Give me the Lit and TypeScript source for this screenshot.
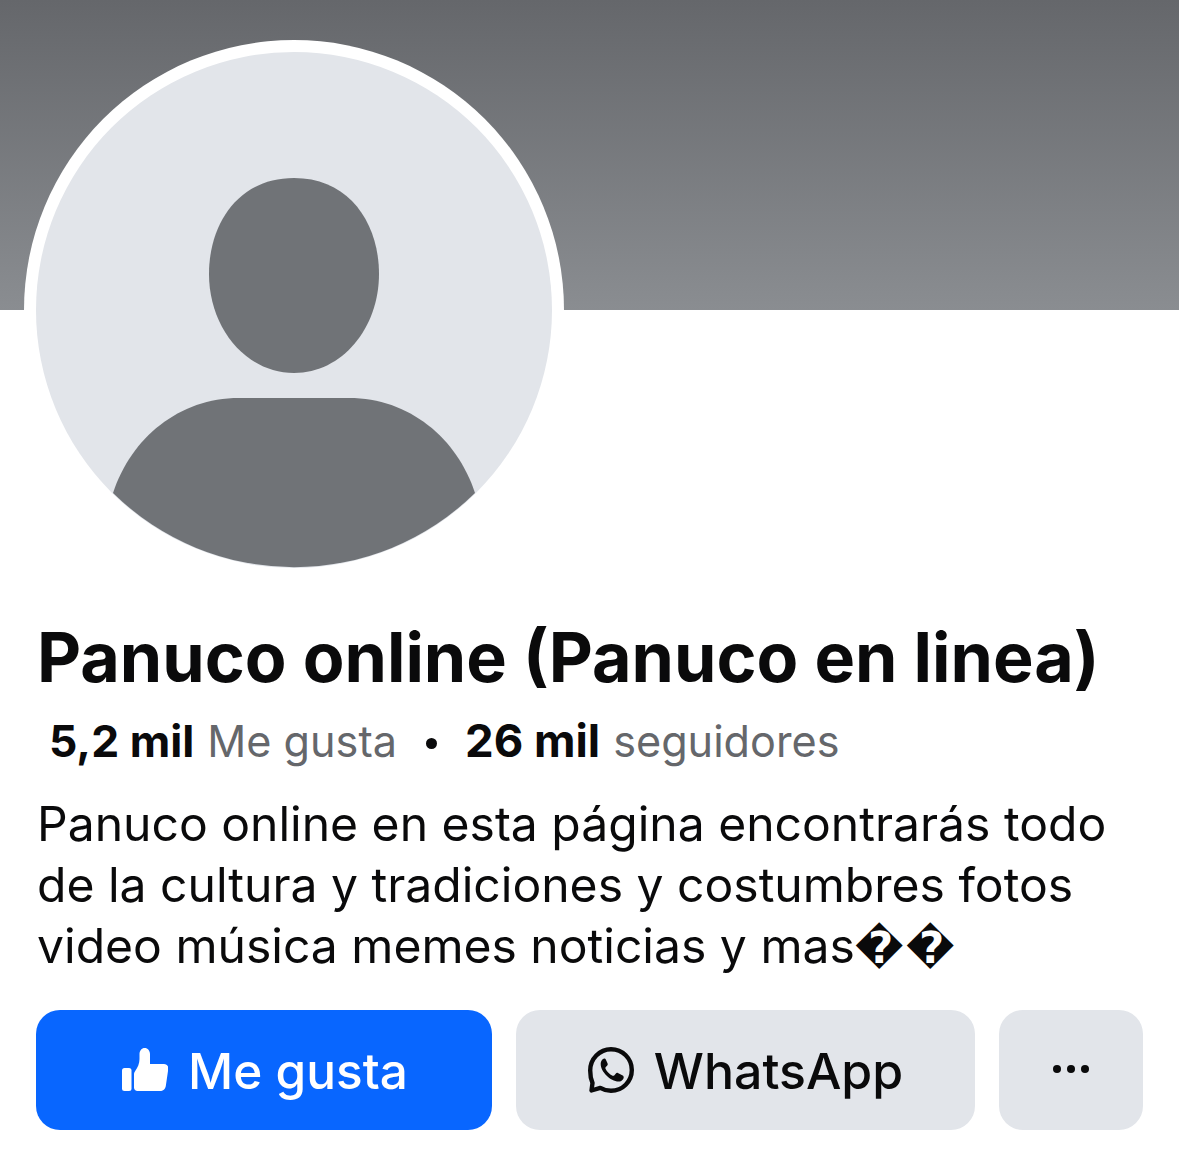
import { LitElement, html, css } from 'lit';
import { customElement } from 'lit/decorators.js';

@customElement('app-root')
export class AppRoot extends LitElement {
  static styles = css`
    :host {
      display: block;
      width: 1179px;
      height: 1160px;
      overflow: hidden;
      background: #fff;
      color: #0a0a0b;
      font-family: Inter, 'Liberation Sans', 'DejaVu Sans', sans-serif;
    }
    .cover {
      height: 310px;
      background: linear-gradient(#65676b, #8a8d91);
    }
    .avatar {
      display: block;
      width: 540px;
      height: 540px;
      margin: -270px 0 0 24px;
      position: relative;
    }
    .info {
      padding: 0 36px 0 37px;
    }
    h1 {
      margin: 38px 0 0;
      font-size: 68.15px;
      line-height: 78px;
      font-weight: 700;
      white-space: nowrap;
    }
    .stats {
      display: flex;
      align-items: center;
      margin: 18px 0 0 12px;
      font-size: 43.2px;
      line-height: 54px;
      white-space: nowrap;
    }
    .stats b {
      font-size: 44.4px;
      font-weight: 700;
      margin-right: 13px;
    }
    .stats i + b {
      font-size: 45.5px;
    }
    .stats span {
      color: #65676b;
    }
    .stats i {
      width: 11px;
      height: 11px;
      border-radius: 50%;
      background: #0a0a0b;
      margin: 4px 28px 0 29px;
    }
    .about {
      margin: 25px 0 0;
      font-size: 48.05px;
      line-height: 61px;
      white-space: nowrap;
    }
    .bad {
      font-family: 'DejaVu Sans', sans-serif;
      font-weight: 700;
      font-size: 44px;
      line-height: 0;
      letter-spacing: 2px;
    }
    .actions {
      display: flex;
      gap: 24px;
      margin: 34px 36px 0;
    }
    button {
      display: flex;
      align-items: center;
      justify-content: center;
      gap: 20px;
      height: 120px;
      border: 0;
      padding: 0;
      border-radius: 24px;
      font: 500 50px Inter, 'Liberation Sans', sans-serif;
      background: #e2e5ea;
      color: #0a0a0b;
    }
    button span {
      padding-top: 2px;
    }
    .like {
      width: 456px;
      font-size: 49.5px;
      background: #0866ff;
      color: #fff;
    }
    .like svg {
      margin-left: 2px;
    }
    .wa {
      width: 459px;
    }
    .more {
      width: 144px;
    }
    .dots {
      margin-bottom: 2px;
    }
    svg.icon {
      flex: none;
    }
  `;

  render() {
    return html`
      <div class="cover"></div>
      <svg class="avatar" viewBox="0 0 540 540">
        <circle cx="270" cy="270" r="270" fill="#fff" />
        <circle cx="270" cy="270" r="258" fill="#e2e5ea" />
        <path
          fill="#707377"
          d="M270 138C326 138 355 184 355 234C355 288 318 333 270 333C222 333 185 288 185 234C185 184 214 138 270 138Z"
        />
        <path
          fill="#707377"
          d="M89 453C107 398 155 358 215 358H325C385 358 433 398 451 453A258 258 0 0 1 89 453Z"
        />
      </svg>
      <div class="info">
        <h1>Panuco online (Panuco en linea)</h1>
        <div class="stats">
          <b>5,2 mil</b><span>Me gusta</span><i></i><b>26 mil</b><span>seguidores</span>
        </div>
        <p class="about">
          Panuco online en esta página encontrarás todo<br />de la cultura y tradiciones y
          costumbres fotos<br />video música memes noticias y mas<span class="bad">\uFFFD\uFFFD</span>
        </p>
      </div>
      <div class="actions">
        <button class="like">
          <svg class="icon" width="46" height="44" viewBox="0 0 46 44" fill="#fff">
            <rect x="0" y="20" width="9.500" height="23" rx="2.500" />
            <path
              d="M12 26c0-1 .5-2 1.200-3 2.500-3.500 4.300-7.500 4.300-12V6c0-3.300 2.200-6 5.200-6s5.300 2.700 5.300 6v10h14c2.800 0 4.700 2.300 4.300 5l-2.500 17c-.4 3-2.800 5-5.800 5H15.500c-2 0-3.500-1.500-3.500-3.500z"
            />
          </svg>
          <span>Me gusta</span>
        </button>
        <button class="wa">
          <svg class="icon" width="46" height="46" viewBox="0 0 46 46">
            <path
              fill="none"
              stroke="#0a0a0b"
              stroke-width="4.400"
              stroke-linejoin="round"
              d="M3.500 43.500l1-7.500C2.900 32.500 2.200 27.800 2.200 23.500 2.200 12 11.500 2.200 23 2.200S43.800 11.500 43.800 23 34.500 43.800 23 43.800c-4 0-7.500-1-10.700-2.900z"
            />
            <path
              fill="#0a0a0b"
              d="M16.500 11.500c-1.500 0-3.800 2.200-3.800 5.500 0 7.500 9.500 17.500 18 17.500 3 0 5-2.500 5-4.300 0-1-.4-1.500-1-1.800l-4.800-2.400c-.8-.4-1.500-.2-2 .4l-1.700 2c-.5.500-1 .6-1.700.3-3-1.400-5.500-4-7-7-.3-.7-.2-1.200.3-1.700l1.500-1.600c.5-.6.6-1.200.3-2l-1.800-4c-.3-.7-.8-.9-1.300-.9z"
            />
          </svg>
          <span>WhatsApp</span>
        </button>
        <button class="more">
          <svg class="icon dots" width="36" height="8" viewBox="0 0 36 8" fill="#0a0a0b">
            <circle cx="4" cy="4" r="4" />
            <circle cx="18" cy="4" r="4" />
            <circle cx="32" cy="4" r="4" />
          </svg>
        </button>
      </div>
    `;
  }
}
